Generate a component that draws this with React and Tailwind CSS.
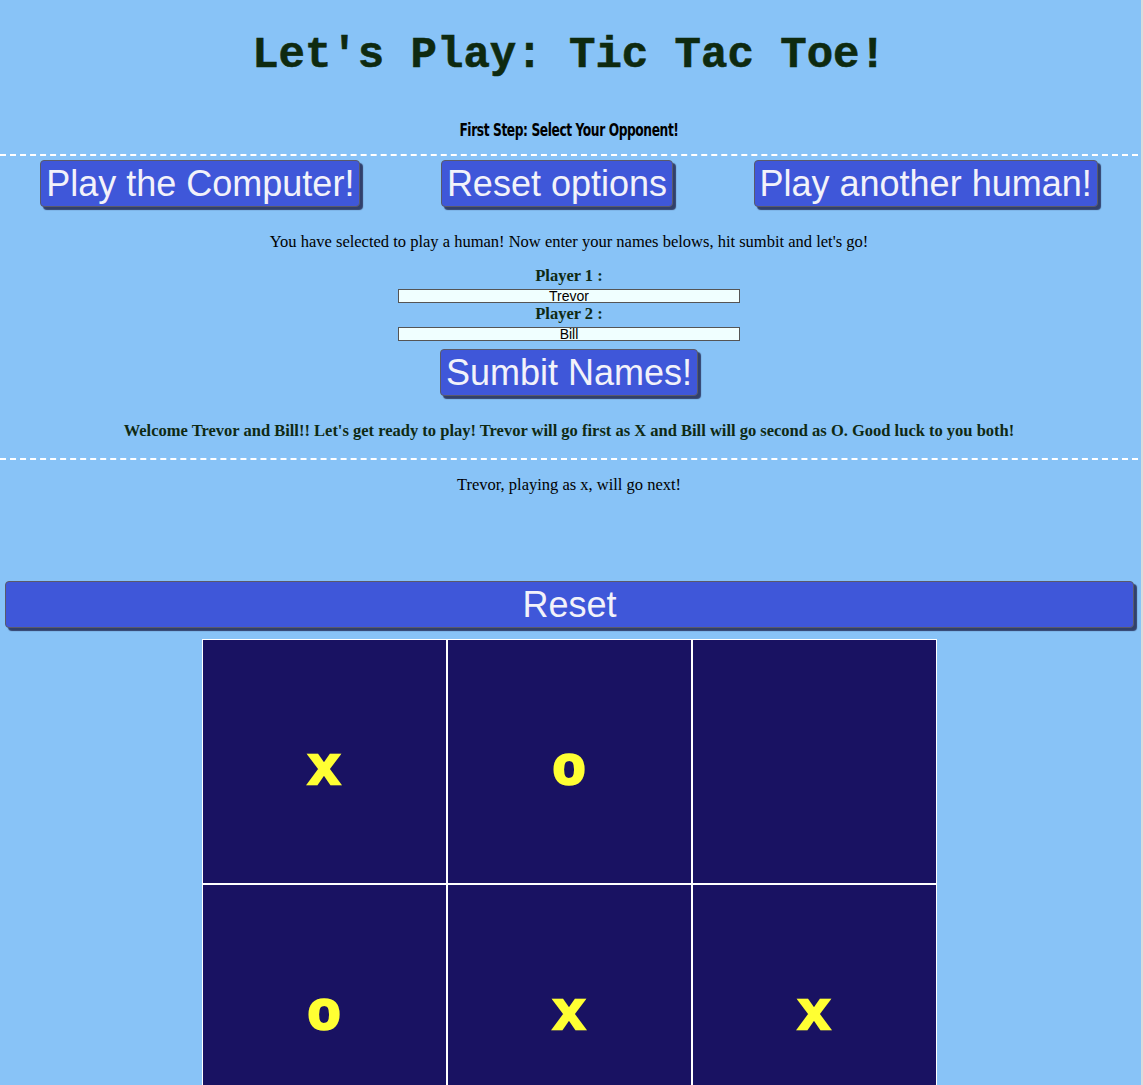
import React, { useState } from "react";

const serif = { fontFamily: '"Liberation Serif", "Times New Roman", serif' };
const mono = "font-['Courier_New','Nimbus_Mono_PS','FreeMono','Liberation_Mono',monospace]";

const BlueButton = ({ children, className = "", onClick }) => (
  <button
    onClick={onClick}
    className={`h-[47px] px-[5px] rounded-[4px] border border-[#5a5a6a] bg-[#3f57d9] text-[#f2f2fa] text-[36px] leading-[41px] shadow-[3px_3px_1px_rgba(20,20,60,0.75)] font-['Liberation_Sans',Arial,sans-serif] whitespace-nowrap ${className}`}
  >
    {children}
  </button>
);

const Cell = ({ value }) => (
  <div className="w-[245px] h-[245px] border border-white bg-[#191262] flex items-center justify-center">
    <span className={`text-[56px] leading-none font-bold text-[#ffff33] [-webkit-text-stroke:2.5px_#ffff33] translate-y-[7px] ${mono}`}>
      {value}
    </span>
  </div>
);

const App = () => {
  const [p1] = useState("Trevor");
  const [p2] = useState("Bill");
  const board = ["x", "o", "", "o", "x", "x", "", "", ""];

  return (
    <div className="min-h-screen bg-[#88c3f7] text-black overflow-hidden pr-[3px] border-r-2 border-[#dcdcdc]" style={serif}>
      {/* header */}
      <h1 className={`pt-[33px] text-center text-[44px] leading-[44px] font-bold text-[#0e2a10] [-webkit-text-stroke:0.6px_#0e2a10] ${mono}`}>
        Let's Play: Tic Tac Toe!
      </h1>
      <p className="mt-[45px] h-[18px] flex justify-center items-center">
        <span className="inline-block text-[17px] font-bold tracking-[-0.5px] text-black scale-x-[0.8] font-['DejaVu_Sans_Condensed','DejaVu_Sans',sans-serif]">
          First Step: Select Your Opponent!
        </span>
      </p>
      <div className="mt-[14px] border-t-2 border-dashed border-white" />

      {/* opponent choice */}
      <div className="mt-[4px] flex justify-around">
        <BlueButton>Play the Computer!</BlueButton>
        <BlueButton>Reset options</BlueButton>
        <BlueButton>Play another human!</BlueButton>
      </div>

      <p className="mt-[26px] text-center text-[16.5px] leading-[18px]">
        You have selected to play a human! Now enter your names belows, hit sumbit and let's go!
      </p>

      {/* names form */}
      <div className="mt-[16px] flex flex-col items-center">
        <label className="text-[16.5px] leading-[18px] font-bold text-[#0f2a14]">Player 1 :</label>
        <input
          readOnly
          value={p1}
          className="mt-[4px] w-[342px] h-[14px] border border-[#555] bg-[#f0ffff] text-center text-[14px] leading-[12px] text-black font-['Liberation_Sans',Arial,sans-serif]"
        />
        <label className="mt-[2px] text-[16.5px] leading-[18px] font-bold text-[#0f2a14]">Player 2 :</label>
        <input
          readOnly
          value={p2}
          className="mt-[4px] w-[342px] h-[14px] border border-[#555] bg-[#f0ffff] text-center text-[14px] leading-[12px] text-black font-['Liberation_Sans',Arial,sans-serif]"
        />
        <BlueButton className="mt-[8px]">Sumbit Names!</BlueButton>
      </div>

      <p className="mt-[26px] text-center text-[16.5px] leading-[18px] font-bold text-[#0f2a14]">
        Welcome Trevor and Bill!! Let's get ready to play! Trevor will go first as X and Bill will go second as O. Good luck to you both!
      </p>
      <div className="mt-[18px] border-t-2 border-dashed border-white" />

      <p className="mt-[16px] text-center text-[16.5px] leading-[18px]">
        Trevor, playing as x, will go next!
      </p>

      {/* game */}
      <div className="mt-[87px] ml-[5px] mr-[4px]">
        <BlueButton className="w-full">Reset</BlueButton>
      </div>
      <div className="mt-[11px] flex justify-center">
        <div className="grid grid-cols-3">
          {board.map((v, i) => (
            <Cell key={i} value={v} />
          ))}
        </div>
      </div>
    </div>
  );
};

export default App;
